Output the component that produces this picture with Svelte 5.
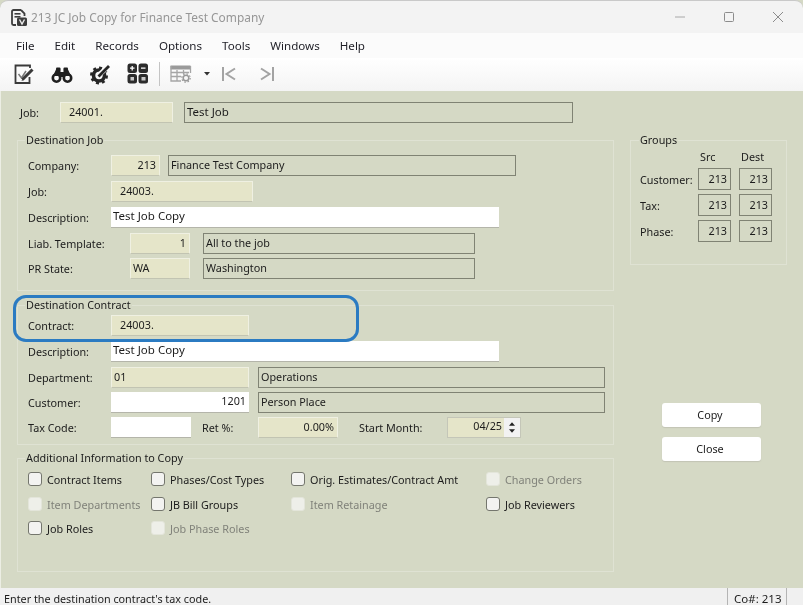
<script>
  const boxes = [
    { label: 'Contract Items', off: false },
    { label: 'Phases/Cost Types', off: false },
    { label: 'Orig. Estimates/Contract Amt', off: false },
    { label: 'Change Orders', off: true },
    { label: 'Item Departments', off: true },
    { label: 'JB Bill Groups', off: false },
    { label: 'Item Retainage', off: true },
    { label: 'Job Reviewers', off: false },
    { label: 'Job Roles', off: false },
    { label: 'Job Phase Roles', off: true }
  ];
  const groups = ['Customer:', 'Tax:', 'Phase:'];
  const menus = ['File', 'Edit', 'Records', 'Options', 'Tools', 'Windows', 'Help'];
</script>

<div class="window">
  <header class="titlebar">
    <svg class="appicon" viewBox="0 0 16 17" width="16" height="17">
      <path d="M10 1H2.500A1.500 1.500 0 0 0 1 2.500V14.500A1.500 1.500 0 0 0 2.500 16H5" fill="none" stroke="#3d3d3d" stroke-width="1.800"/>
      <path d="M10 1L13.500 4.500V7" fill="none" stroke="#3d3d3d" stroke-width="1.800"/>
      <rect x="3.500" y="4" width="6" height="1.600" fill="#3d3d3d"/>
      <rect x="3.500" y="7" width="6" height="1.600" fill="#3d3d3d"/>
      <rect x="6" y="8.500" width="10" height="8.500" rx="1.500" fill="#3d3d3d"/>
      <path d="M8.500 10.500L11 15L13.500 10.500" fill="none" stroke="#eee" stroke-width="1.400"/>
    </svg>
    <span class="title">213 JC Job Copy for Finance Test Company</span>
    <div class="winctl">
      <svg viewBox="0 0 12 12" width="12" height="12"><path d="M1 6H11" stroke="#a8a8a8" stroke-width="1"/></svg>
      <svg viewBox="0 0 12 12" width="12" height="12"><rect x="1.500" y="1.500" width="9" height="9" rx="1" fill="none" stroke="#8c8c8c" stroke-width="1"/></svg>
      <svg viewBox="0 0 12 12" width="12" height="12"><path d="M1 1L11 11M11 1L1 11" stroke="#8c8c8c" stroke-width="1"/></svg>
    </div>
  </header>

  <nav class="menubar">
    {#each menus as m}<span>{m}</span>{/each}
  </nav>

  <div class="toolbar">
    <svg class="tool first" viewBox="0 0 22 22" width="22" height="22">
      <path d="M17 5V2.500H2.500V20H16.500V14" fill="none" stroke="#3a3a3a" stroke-width="1.800"/>
      <path d="M5.500 11L8.500 15L13 8" fill="none" stroke="#777" stroke-width="1.500"/>
      <path d="M9.500 16.500L19.500 6.500" stroke="#3a3a3a" stroke-width="3"/>
      <path d="M8.500 18L9.500 15.500L11 17Z" fill="#3a3a3a"/>
    </svg>
    <svg class="tool" viewBox="0 0 22 22" width="22" height="22">
      <circle cx="5.500" cy="15" r="3.700" fill="none" stroke="#1f1f1f" stroke-width="2.600"/>
      <circle cx="16.500" cy="15" r="3.700" fill="none" stroke="#1f1f1f" stroke-width="2.600"/>
      <path d="M2 13L5 6.500H9.500V13ZM20 13L17 6.500H12.500V13Z" fill="#1f1f1f"/>
      <rect x="5" y="4.500" width="4.500" height="3" rx="1" fill="#1f1f1f"/>
      <rect x="12.500" y="4.500" width="4.500" height="3" rx="1" fill="#1f1f1f"/>
      <rect x="9" y="9" width="4" height="5" fill="#1f1f1f"/>
    </svg>
    <svg class="tool" viewBox="0 0 22 22" width="22" height="22">
      <circle cx="10" cy="12.500" r="5.500" fill="none" stroke="#262626" stroke-width="3.600"/>
      <circle cx="10" cy="12.500" r="7.800" fill="none" stroke="#262626" stroke-width="2.400" stroke-dasharray="3 3.100"/>
      <path d="M9 13L20 2.500" stroke="#fafafa" stroke-width="5"/>
      <path d="M9.500 13.500L20 3" stroke="#262626" stroke-width="2.800"/>
    </svg>
    <svg class="tool" viewBox="0 0 22 22" width="22" height="22">
      <rect x="0.500" y="0.500" width="9.500" height="9.500" rx="2.500" fill="#2c2c2c"/>
      <rect x="11.500" y="0.500" width="9.500" height="9.500" rx="2.500" fill="#2c2c2c"/>
      <rect x="0.500" y="11" width="9.500" height="9.500" rx="2.500" fill="#2c2c2c"/>
      <rect x="11.500" y="11" width="9.500" height="9.500" rx="2.500" fill="#2c2c2c"/>
      <path d="M3 5.200H7.500M5.200 3V7.500M14 5.200H18.500" stroke="#fff" stroke-width="1.300"/>
      <rect x="3.500" y="14" width="3.500" height="3.500" fill="#c9c9c9"/>
      <rect x="14.500" y="14" width="4" height="3.500" fill="#c9c9c9"/>
    </svg>
    <span class="sep"></span>
    <svg class="tool grid" viewBox="0 0 22 18" width="22" height="18">
      <rect x="0.500" y="0.500" width="20" height="4" fill="#9a9a9a"/>
      <path d="M1 1V16H11M20.500 1V8M1 7.500H19M1 11.500H11M7 5V16M13.500 5V9" fill="none" stroke="#a5a5a5" stroke-width="1.300"/>
      <circle cx="16" cy="13" r="2.800" fill="#f7f7f7" stroke="#999" stroke-width="1.500"/>
      <circle cx="16" cy="13" r="4.200" fill="none" stroke="#999" stroke-width="1.200" stroke-dasharray="1.500 1.800"/>
    </svg>
    <svg class="tool caret" viewBox="0 0 6 4" width="6" height="4"><path d="M0 0H6L3 3.500Z" fill="#333"/></svg>
    <svg class="tool nav" viewBox="0 0 16 16" width="16" height="16">
      <path d="M2 1V15M14 2.500L5.500 8L14 13.500" fill="none" stroke="#a3a3a3" stroke-width="2"/>
    </svg>
    <svg class="tool nav2" viewBox="0 0 16 16" width="16" height="16">
      <path d="M14 1V15M2 2.500L10.500 8L2 13.500" fill="none" stroke="#a3a3a3" stroke-width="2"/>
    </svg>
  </div>

  <main class="content">
    <div class="row jobrow">
      <span class="lbl l-job">Job:</span>
      <span class="f ro w-job1">24001.</span>
      <span class="f show w-job2 wide">Test Job</span>
    </div>

    <div class="columns">
      <div class="left">
        <fieldset class="g1">
          <legend>Destination Job</legend>
          <div class="row">
            <span class="lbl l83">Company:</span>
            <span class="f ro num w49">213</span>
            <span class="f show m8 w348">Finance Test Company</span>
          </div>
          <div class="row gap"><span class="lbl l83">Job:</span><span class="f ro w142">24003.</span></div>
          <div class="row gap"><span class="lbl l83">Description:</span><span class="f inp w388 wide">Test Job Copy</span></div>
          <div class="row gap">
            <span class="lbl l102">Liab. Template:</span>
            <span class="f ro num w60">1</span>
            <span class="f show m13 w272">All to the job</span>
          </div>
          <div class="row tight">
            <span class="lbl l102">PR State:</span>
            <span class="f ro flat w60">WA</span>
            <span class="f show m13 w272">Washington</span>
          </div>
        </fieldset>

        <fieldset class="g2">
          <legend>Destination Contract</legend>
          <div class="row"><span class="lbl l83">Contract:</span><span class="f ro w138">24003.</span></div>
          <div class="row gap"><span class="lbl l83">Description:</span><span class="f inp w388 wide">Test Job Copy</span></div>
          <div class="row gap">
            <span class="lbl l83">Department:</span>
            <span class="f ro w138 flat">01</span>
            <span class="f show m9 w347">Operations</span>
          </div>
          <div class="row tight">
            <span class="lbl l83">Customer:</span>
            <span class="f inp num w138">1201</span>
            <span class="f show m9 w347">Person Place</span>
          </div>
          <div class="row tight">
            <span class="lbl l83">Tax Code:</span>
            <span class="f inp w80"></span>
            <span class="lbl l-ret">Ret %:</span>
            <span class="f ro num w80">0.00%</span>
            <span class="lbl l-month">Start Month:</span>
            <span class="spin">
              <span class="spinval">04/25</span>
              <span class="spinbtns">
                <svg viewBox="0 0 7 4" width="6" height="4"><path d="M0 4H7L3.500 0Z" fill="#222"/></svg>
                <svg viewBox="0 0 7 4" width="6" height="4"><path d="M0 0H7L3.500 4Z" fill="#222"/></svg>
              </span>
            </span>
          </div>
        </fieldset>

        <fieldset class="g3">
          <legend>Additional Information to Copy</legend>
          <div class="checks">
            {#each boxes as b}
              <label class="check" class:off={b.off}>
                <input type="checkbox" disabled={b.off} />
                <span>{b.label}</span>
              </label>
            {/each}
          </div>
        </fieldset>
      </div>

      <div class="right">
        <fieldset class="groups">
          <legend>Groups</legend>
          <div class="ghead"><span>Src</span><span>Dest</span></div>
          {#each groups as g}
            <div class="grow">
              <span class="glabel">{g}</span>
              <span class="gval">213</span>
              <span class="gval">213</span>
            </div>
          {/each}
        </fieldset>
        <div class="actions">
          <button>Copy</button>
          <button>Close</button>
        </div>
      </div>
    </div>
  </main>

  <footer class="status">
    <span class="msg">Enter the destination contract's tax code.</span>
    <span class="co">Co#: 213</span>
  </footer>

  <div class="highlight"></div>
</div>

<style>
  :global(html), :global(body) {
    margin: 0;
    overflow: hidden;
    background: #fff;
  }
  .window {
    position: relative;
    width: 803px;
    height: 605px;
    overflow: hidden;
    display: flex;
    flex-direction: column;
    font-family: "Noto Sans", "Open Sans", sans-serif;
    font-size: 10.8px;
    color: #1c1c1c;
    box-sizing: border-box;
    background: #d5d9c5;
    filter: blur(0.3px);
  }
  .titlebar {
    height: 33px;
    flex: none;
    display: flex;
    align-items: center;
    background: #f3f3f3;
    border-top: 1px solid #c9c9c9;
    border-radius: 8px 8px 0 0;
    box-sizing: border-box;
  }
  .appicon { margin-left: 11px; margin-top: 1px; }
  .title {
    margin-left: 4px;
    color: #969696;
    font-size: 11.9px;
    white-space: nowrap;
  }
  .winctl {
    margin-left: auto;
    display: flex;
    gap: 37px;
    margin-right: 19px;
  }
  .menubar {
    height: 25px;
    flex: none;
    display: flex;
    align-items: center;
    gap: 20px;
    padding-left: 16px;
    background: #fbfbfb;
    font-size: 11.6px;
    color: #1e1e26;
  }
  .toolbar {
    height: 33px;
    flex: none;
    display: flex;
    align-items: center;
    padding-bottom: 2px;
    box-sizing: border-box;
    background: linear-gradient(#ffffff, #f4f4f4);
  }
  .tool { flex: none; }
  .tool.first { margin-left: 13px; }
  .tool + .tool { margin-left: 16px; }
  .sep {
    width: 1px;
    height: 24px;
    background: #c4c4c4;
    margin-left: 10px;
  }
  .tool.grid { margin-left: 10px; }
  .tool.caret { margin-left: 12px; }
  .tool.nav { margin-left: 11px; }
  .tool.nav2 { margin-left: 22px; }

  .content {
    flex: 1;
    min-height: 0;
    padding: 11px 0 0 0;
    box-sizing: border-box;
    background: #d5d9c5;
    box-shadow: inset 1px 0 #eceee4;
  }
  .row {
    display: flex;
    align-items: center;
    height: 21px;
  }
  .gap { margin-top: 5px; }
  .tight { margin-top: 4px; }
  .jobrow { padding-left: 20px; }
  .lbl { flex: none; white-space: nowrap; margin-top: -1px; }
  .l-job { width: 40px; }
  .l83 { width: 83px; }
  .l102 { width: 102px; }
  .l-ret { width: 56px; margin-left: 11px; }
  .l-month { width: 88px; margin-left: 21px; }

  .f {
    flex: none;
    height: 21px;
    line-height: 19px;
    box-sizing: border-box;
    padding: 0 2px;
    white-space: nowrap;
  }
  .wide { font-size: 11.5px; }
  .ro {
    background: #e5e5c9;
    border: 1px solid #eff0e2;
    border-bottom-color: #c2c4b2;
    padding-left: 8px;
    line-height: 17px;
  }
  .ro.flat { padding-left: 2px; }
  .inp {
    background: #fff;
    border-bottom: 1px solid #b4b5aa;
    line-height: 18px;
  }
  .show {
    background: #d5d9c5;
    border: 1.500px solid #808374;
    line-height: 18px;
  }
  .num { text-align: right; padding-right: 3px; }
  .w-job1 { width: 113px; }
  .w-job2 { width: 389px; margin-left: 11px; }
  .w49 { width: 49px; }
  .w60 { width: 60px; }
  .w80 { width: 80px; }
  .w138 { width: 138px; }
  .w142 { width: 142px; }
  .w272 { width: 272px; }
  .w347 { width: 347px; }
  .w348 { width: 348px; }
  .w388 { width: 388px; }
  .m8 { margin-left: 8px; }
  .m9 { margin-left: 9px; }
  .m13 { margin-left: 13px; }

  .spin {
    flex: none;
    width: 74px;
    height: 21px;
    box-sizing: border-box;
    display: flex;
    background: #e5e5c9;
    border: 1.500px solid #c4c6b8;
  }
  .spinval {
    flex: 1;
    text-align: right;
    line-height: 16px;
    padding-right: 2px;
  }
  .spinbtns {
    width: 16px;
    flex: none;
    display: flex;
    flex-direction: column;
    align-items: center;
    justify-content: center;
    gap: 3px;
    background: #f2f2f2;
  }

  .columns {
    display: flex;
    margin-top: 9px;
    padding-left: 17px;
  }
  .left { width: 597px; flex: none; }
  fieldset {
    margin: 0;
    min-width: 0;
    border: 1px solid #dfe2d3;
    padding: 0 10px;
    box-sizing: border-box;
  }
  legend {
    padding: 0 1px;
    margin-left: -3px;
    line-height: 16px;
    white-space: nowrap;
  }
  .g1 { padding-top: 7px; padding-bottom: 11px; }
  .g2 { margin-top: 6px; padding-top: 2px; padding-bottom: 6px; }
  .g3 { margin-top: 5px; padding-top: 3px; padding-bottom: 33px; }

  .checks {
    display: grid;
    grid-template-columns: 123px 140px 195px 1fr;
    grid-template-rows: 25px 24px 20px;
    align-items: start;
  }
  .check {
    display: flex;
    align-items: center;
    gap: 5px;
    height: 20px;
    white-space: nowrap;
  }
  .check input {
    appearance: none;
    width: 14px;
    height: 14px;
    margin: 0;
    flex: none;
    box-sizing: border-box;
    background: #f3f3f1;
    border: 1.300px solid #74766d;
    border-radius: 3px;
  }
  .check.off { color: #80827a; }
  .check.off input {
    background: #eeefe9;
    border-color: #e3e5da;
  }

  .right {
    margin-left: 16px;
    width: 157px;
    flex: none;
  }
  .groups {
    height: 133px;
    padding: 0 0 0 9px;
  }
  .groups legend { margin-left: -1px; }
  .ghead {
    display: flex;
    height: 17px;
    line-height: 17px;
    padding-left: 60px;
  }
  .ghead span:first-child { width: 41px; }
  .grow {
    display: flex;
    align-items: center;
    gap: 8px;
    height: 22px;
    margin-top: 4px;
  }
  .ghead + .grow { margin-top: 3px; }
  .glabel { width: 50px; }
  .gval {
    width: 33px;
    height: 22px;
    box-sizing: border-box;
    border: 1.500px solid #808374;
    text-align: right;
    line-height: 19px;
    padding-right: 3px;
  }
  .actions {
    display: flex;
    flex-direction: column;
    gap: 10px;
    margin-top: 138px;
    padding-left: 32px;
  }
  button {
    width: 99px;
    height: 24px;
    border: none;
    border-radius: 3px;
    background: #fff;
    box-shadow: 0 1px 1px #c2c4b4;
    font: inherit;
    color: #1c1c1c;
    padding: 0 3px 1px 0;
  }

  .status {
    height: 17px;
    flex: none;
    display: flex;
    background: #f0f0f0;
    font-size: 10.8px;
    line-height: 22px;
    white-space: nowrap;
  }
  .msg { padding-left: 4px; flex: 1; }
  .co {
    width: 60px;
    box-sizing: border-box;
    padding-left: 6px;
    border-left: 1px solid #b4b4b4;
    border-right: 1px solid #b4b4b4;
    margin-right: 16px;
    font-size: 11.5px;
  }

  .highlight {
    position: absolute;
    left: 13px;
    top: 295px;
    width: 346px;
    height: 47px;
    box-sizing: border-box;
    border: 3px solid #2b7bc2;
    border-radius: 13px;
    pointer-events: none;
  }
</style>
